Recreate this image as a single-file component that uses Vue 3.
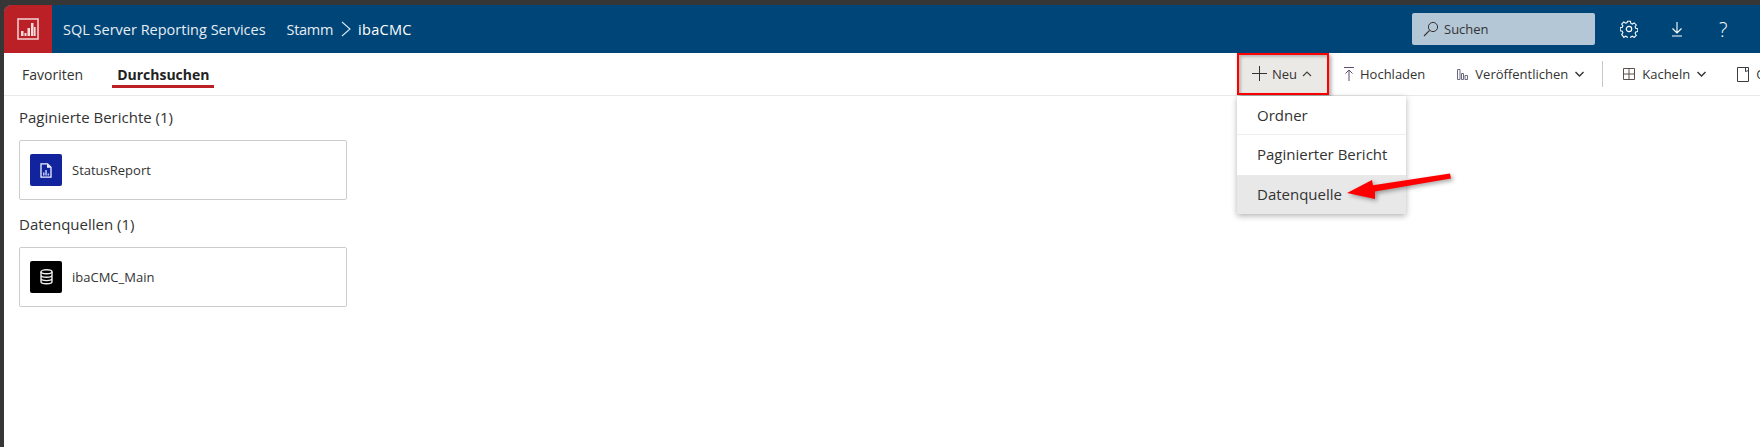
<template>
  <div class="page">
    <div class="app">
      <header class="topbar">
        <div class="logo">
          <svg width="22" height="22" viewBox="0 0 22 22">
            <rect x="1" y="1" width="20" height="20" fill="none" stroke="#f3c9cb" stroke-width="1.6" />
            <rect x="4" y="13" width="2.5" height="5" fill="#f7dcdd" />
            <rect x="7.5" y="15" width="2" height="3" fill="#f7dcdd" />
            <rect x="10.5" y="10" width="2.5" height="8" fill="#f7dcdd" />
            <rect x="14" y="5" width="2.5" height="13" fill="#f7dcdd" />
            <rect x="17" y="9" width="1.6" height="9" fill="#f7dcdd" />
          </svg>
        </div>
        <span class="product">SQL Server Reporting Services</span>
        <nav class="crumbs">
          <span>Stamm</span>
          <svg class="crumb-sep" width="10" height="16" viewBox="0 0 10 16">
            <path d="M1 1l8 7-8 7" fill="none" stroke="#dbe5ee" stroke-width="1.1" />
          </svg>
          <span class="current">ibaCMC</span>
        </nav>
        <div class="search">
          <svg width="16" height="16" viewBox="0 0 16 16">
            <circle cx="10" cy="6" r="4.6" fill="none" stroke="#333" stroke-width="1" />
            <path d="M6.6 9.4L1 15" stroke="#333" stroke-width="1.1" />
          </svg>
          <span>Suchen</span>
        </div>
        <div class="top-icons">
          <svg width="18" height="18" viewBox="0 0 18 18">
            <path d="M7.4 1h3.200l.5 2.300 1.600.7 2-1.300 2.300 2.300-1.300 2 .7 1.600 2.300.5v3.200l-2.300.5-.7 1.600 1.300 2-2.300 2.300-2-1.300-1.600.7-.5 2.300H7.400l-.5-2.300-1.600-.7-2 1.300L1 15.400l1.300-2-.7-1.600L-.7 11.300V8.100l2.300-.5.7-1.600L1 4l2.300-2.300 2 1.300 1.600-.7z" transform="translate(.8 .4) scale(.91)" fill="none" stroke="#fff" stroke-width="1.200" />
            <circle cx="9" cy="9" r="2.700" fill="none" stroke="#fff" stroke-width="1.200" />
          </svg>
          <svg width="12" height="16" viewBox="0 0 12 16">
            <path d="M6 1v11M1.500 7.500L6 12l4.500-4.500M1 15h10" fill="none" stroke="#fff" stroke-width="1.100" />
          </svg>
          <span class="help">?</span>
        </div>
      </header>

      <div class="toolbar">
        <div class="tabs">
          <span class="tab">Favoriten</span>
          <span class="tab active">Durchsuchen</span>
        </div>
        <div class="actions">
          <div class="new-wrap">
            <button class="action new">
              <svg width="15" height="15" viewBox="0 0 15 15"><path d="M7.500 0v15M0 7.500h15" stroke="#333" stroke-width="1" /></svg>
              <span>Neu</span>
              <svg width="10" height="6" viewBox="0 0 10 6"><path d="M1 5l4-4 4 4" fill="none" stroke="#444" stroke-width="1.200" /></svg>
            </button>
            <div class="menu">
              <div class="menu-item divided">Ordner</div>
              <div class="menu-item">Paginierter Bericht</div>
              <div class="menu-item hover">Datenquelle</div>
            </div>
            <svg class="pointer" width="108" height="30" viewBox="0 0 108 30">
              <path d="M1 22L26 9l1 5.200L104 2.500l1 5-76 13V28z" fill="#ff0000" />
            </svg>
          </div>
          <button class="action upload">
            <svg width="10" height="14" viewBox="0 0 10 14"><path d="M0 .5h10M5 14V3M1.500 6.500L5 3l3.500 3.500" fill="none" stroke="#5f4b6b" stroke-width="1" /></svg>
            <span>Hochladen</span>
          </button>
          <button class="action publish">
            <svg width="11" height="11" viewBox="0 0 11 11"><path d="M.5.500h2.500v10H.5zM4.500 4.500h2v6h-2zM8 6.500h2.500v4H8z" fill="none" stroke="#6a6a80" stroke-width="1" /></svg>
            <span>Veröffentlichen</span>
            <svg width="9" height="6" viewBox="0 0 9 6"><path d="M.5 1l4 4 4-4" fill="none" stroke="#333" stroke-width="1.400" /></svg>
          </button>
          <i class="sep"></i>
          <button class="action tiles">
            <svg width="12" height="12" viewBox="0 0 12 12"><path d="M.5.5h11v11H.5zM6 .5v11M.5 6h11" fill="none" stroke="#5a4f4a" stroke-width="1" /></svg>
            <span>Kacheln</span>
            <svg width="9" height="6" viewBox="0 0 9 6"><path d="M.5 1l4 4 4-4" fill="none" stroke="#333" stroke-width="1.400" /></svg>
          </button>
          <button class="action last">
            <svg width="12" height="15" viewBox="0 0 12 15"><path d="M.5.5h11v14H.5zM8.500.5v4l3-1" fill="none" stroke="#3c3c3c" stroke-width="1" /></svg>
            <span>Ordner verwalten</span>
          </button>
        </div>
      </div>

      <main class="content">
        <section v-for="group in groups" :key="group.title" class="group">
          <h2>{{ group.title }}</h2>
          <div class="card">
            <div class="card-icon" :class="group.kind">
              <svg v-if="group.kind === 'report'" width="12" height="15" viewBox="0 0 12 15">
                <path d="M1 .8h6.500L11 4.300V14.200H1z" fill="none" stroke="#f2f4ff" stroke-width="1.300" />
                <path d="M7 1v3.800h4" fill="#f2f4ff" />
                <path d="M3 12.500V9.500h1.500v3zM5.300 12.500V7h1.500v5.500zM7.600 12.500v-2h1.500v2z" fill="#c4cdf5" />
              </svg>
              <svg v-else width="13" height="16" viewBox="0 0 13 16">
                <ellipse cx="6.500" cy="2.800" rx="5.500" ry="2" fill="none" stroke="#f0f0f0" stroke-width="1.400" />
                <path d="M1 2.800v10c0 1.100 2.500 2 5.500 2s5.500-.9 5.500-2v-10M1 6.200c0 1.100 2.500 2 5.500 2s5.500-.9 5.500-2M1 9.600c0 1.100 2.500 2 5.500 2s5.500-.9 5.500-2" fill="none" stroke="#f0f0f0" stroke-width="1.400" />
              </svg>
            </div>
            <span class="card-name">{{ group.item }}</span>
          </div>
        </section>
      </main>
    </div>
  </div>
</template>

<script setup>
const groups = [
  { title: 'Paginierte Berichte (1)', item: 'StatusReport', kind: 'report' },
  { title: 'Datenquellen (1)', item: 'ibaCMC_Main', kind: 'source' }
]
</script>

<style>
html, body {
  margin: 0;
  background: #333;
  overflow: hidden;
}
</style>

<style scoped>
.page {
  width: 1760px;
  height: 447px;
  padding: 5px 0 0 4px;
  box-sizing: border-box;
  background: #363636;
  font-family: "Open Sans", "Noto Sans", sans-serif;
  color: #333;
}
.app {
  height: 442px;
  background: #fff;
  border-top-left-radius: 8px;
  overflow: hidden;
}
.topbar {
  display: flex;
  align-items: center;
  height: 48px;
  background: #004578;
  color: #fff;
}
.logo {
  display: flex;
  align-items: center;
  justify-content: center;
  width: 48px;
  height: 48px;
  background: #bb2026;
}
.product {
  margin-left: 11px;
  font-size: 14.500px;
  color: #e6edf3;
}
.crumbs {
  display: flex;
  align-items: center;
  margin-left: 21px;
  font-size: 14.500px;
  letter-spacing: -.3px;
  color: #e6edf3;
}
.crumb-sep {
  margin: 0 7px 0 8px;
}
.current {
  color: #fff;
  font-size: 14.500px;
  font-weight: 500;
  letter-spacing: .3px;
}
.search {
  display: flex;
  align-items: center;
  gap: 5px;
  width: 183px;
  height: 32px;
  margin-left: auto;
  padding-left: 11px;
  box-sizing: border-box;
  background: #b3c7d7;
  border-radius: 2px;
  font-size: 13px;
  color: #333;
}
.top-icons {
  display: flex;
  align-items: center;
  flex: none;
  gap: 33px;
  width: 165px;
  padding-left: 25px;
  box-sizing: border-box;
}
.top-icons svg {
  flex: none;
}
.help {
  font-size: 20px;
  font-weight: 300;
  margin-left: 3px;
}
.toolbar {
  display: flex;
  justify-content: space-between;
  height: 42px;
  border-bottom: 1px solid #e8e8e8;
}
.tabs {
  display: flex;
  gap: 29px;
  padding-left: 18px;
}
.tab {
  height: 20px;
  margin-top: 12px;
  font-size: 14px;
  line-height: 20px;
  color: #333;
}
.active {
  padding: 0 5px;
  font-weight: 700;
  color: #222;
  border-bottom: 3px solid #bb2026;
}
.actions {
  display: flex;
  flex: none;
  align-items: center;
  width: 523px;
  height: 42px;
}
.new-wrap {
  position: relative;
  flex: none;
  margin-top: -1px;
}
.action {
  display: flex;
  align-items: center;
  flex: none;
  height: 42px;
  padding: 0;
  border: 0;
  background: none;
  font: inherit;
  font-size: 13px;
  color: #333;
  white-space: nowrap;
}
.new {
  gap: 5px;
  width: 92px;
  box-sizing: border-box;
  background: #ebe9e6;
  border: 2px solid #f00;
  padding-left: 13px;
  box-shadow: 2px 2px 4px rgba(0, 0, 0, .35), inset 2px 2px 3px rgba(0, 0, 0, .22);
}
.upload {
  gap: 6px;
  margin-left: 15px;
}
.publish {
  gap: 7px;
  margin-left: 32px;
}
.sep {
  flex: none;
  width: 1px;
  height: 26px;
  margin-left: 18px;
  background: #c8c8c8;
}
.tiles {
  gap: 7px;
  margin-left: 20px;
}
.last {
  gap: 7px;
  margin-left: 31px;
}
.menu {
  position: absolute;
  left: 0;
  top: 43px;
  width: 169px;
  background: #fff;
  box-shadow: 0 2px 6px rgba(0, 0, 0, .3);
  font-size: 15px;
  z-index: 2;
}
.menu-item {
  height: 39.500px;
  line-height: 39px;
  padding-left: 20px;
  box-sizing: border-box;
  color: #333;
}
.divided {
  border-bottom: 1px solid #eee;
}
.hover {
  background: #e8e8e8;
}
.pointer {
  position: absolute;
  left: 109px;
  top: 118px;
  z-index: 3;
  filter: drop-shadow(2px 2px 2px rgba(0, 0, 0, .35));
}
.content {
  padding: 11px 0 0 15px;
}
.group h2 {
  margin: 0;
  font-size: 15px;
  font-weight: 400;
  line-height: 20px;
  color: #333;
}
.card {
  display: flex;
  align-items: center;
  width: 328px;
  height: 60px;
  margin: 13px 0 14px;
  padding-left: 10px;
  box-sizing: border-box;
  border: 1px solid #ccc;
  border-radius: 2px;
}
.card-icon {
  display: flex;
  align-items: center;
  justify-content: center;
  width: 32px;
  height: 32px;
  border-radius: 2px;
}
.report {
  background: #12239e;
}
.source {
  background: #000;
}
.card-name {
  margin-left: 10px;
  font-size: 13px;
  color: #333;
}
</style>
